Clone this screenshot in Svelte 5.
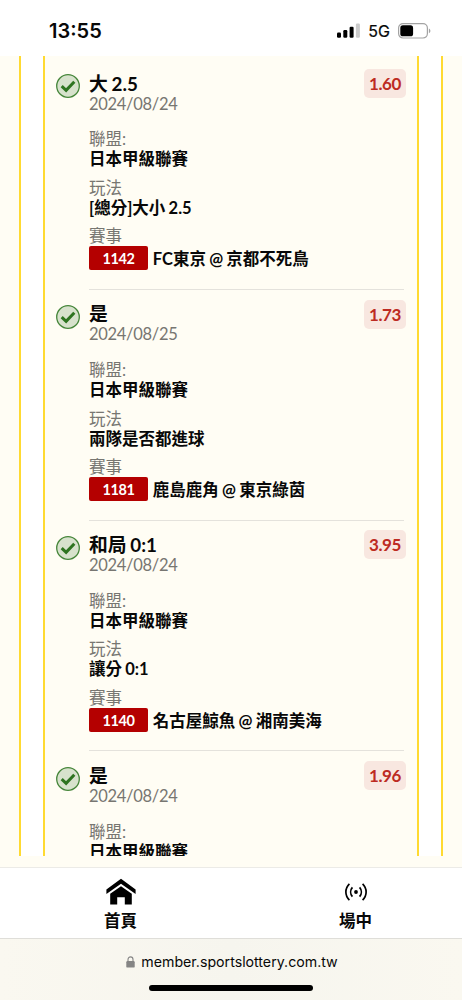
<script lang="ts">
	const bets = [
		{pick: '大 2.5', date: '2024/08/24', odds: '1.60', league: '日本甲級聯賽', play: '[總分]大小 2.5', code: '1142', match: 'FC東京 @ 京都不死鳥'},
		{pick: '是', date: '2024/08/25', odds: '1.73', league: '日本甲級聯賽', play: '兩隊是否都進球', code: '1181', match: '鹿島鹿角 @ 東京綠茵'},
		{pick: '和局 0:1', date: '2024/08/24', odds: '3.95', league: '日本甲級聯賽', play: '讓分 0:1', code: '1140', match: '名古屋鯨魚 @ 湘南美海'},
		{pick: '是', date: '2024/08/24', odds: '1.96', league: '日本甲級聯賽', play: '', code: '', match: ''},
	];
</script>

<div class="screen">
	<header class="status">
		<span class="time">13:55</span>
		<div class="signals">
			<svg width="24" height="16" viewBox="0 0 24 16">
				<rect x="0" y="9.5" width="4" height="5.3" rx="1.2" />
				<rect x="6.3" y="7" width="4" height="7.8" rx="1.2" />
				<rect x="12.6" y="3.8" width="4" height="11" rx="1.2" />
				<rect x="18.9" y="0.5" width="4" height="14.3" rx="1.2" fill="#cbcbcb" />
			</svg>
			<span class="network">5G</span>
			<svg width="33" height="16" viewBox="0 0 33 16">
				<rect x="0.6" y="0.6" width="28.8" height="14.4" rx="4.4" fill="none" stroke="#a3a3a3" stroke-width="1.2" />
				<rect x="2.3" y="2.3" width="12.8" height="11" rx="2.6" />
				<path d="M30.9 5.4c2 .9 2 3.9 0 4.8z" fill="#a3a3a3" />
			</svg>
		</div>
	</header>

	<main class="slides">
		<div class="slide prev"></div>
		<div class="slide current">
			{#each bets as bet}
				<section class="bet">
					<svg class="tick" width="24" height="24" viewBox="0 0 24 24">
						<circle cx="12" cy="12" r="11.3" fill="#d7e2cc" stroke="#46863a" stroke-width="1.3" />
						<path d="M5.7 12.2l4.4 4.2 8.2-8.7" fill="none" stroke="#2e7420" stroke-width="3" />
					</svg>
					<div class="detail">
						<div class="top">
							<div>
								<h2>{bet.pick}</h2>
								<p class="date">{bet.date}</p>
							</div>
							<span class="odds">{bet.odds}</span>
						</div>
						<p class="label">聯盟:</p>
						<p class="value">{bet.league}</p>
						{#if bet.play}
							<p class="label">玩法</p>
							<p class="value">{bet.play}</p>
							<p class="label">賽事</p>
							<div class="match">
								<span class="code">{bet.code}</span>
								<span class="value">{bet.match}</span>
							</div>
						{/if}
					</div>
				</section>
			{/each}
		</div>
		<div class="slide next"></div>
	</main>

	<nav>
		<div class="tab">
			<svg width="30" height="28" viewBox="0 0 30 28">
				<path d="M15 0.8L29.6 11.4V16L15 5.7L0.4 16V11.4z" />
				<path d="M15 8.2L25.8 15.8V26.6H18.8V19.2H11.2V26.6H4.2V15.8z" />
			</svg>
			<span>首頁</span>
		</div>
		<div class="tab">
			<svg width="24" height="28" viewBox="0 0 24 28" fill="none" stroke="#000" stroke-width="1.7">
				<circle cx="12" cy="14" r="1.9" fill="#000" stroke="none" />
				<path d="M8.4 9.4a7 7 0 0 0 0 9.2M15.6 9.4a7 7 0 0 1 0 9.2" />
				<path d="M5.4 5.9c-4.7 4.6-4.7 11.6 0 16.2M18.6 5.9c4.7 4.6 4.7 11.6 0 16.2" />
			</svg>
			<span>場中</span>
		</div>
	</nav>

	<footer>
		<div class="address">
			<svg width="9" height="12" viewBox="0 0 9 12">
				<rect x="0.3" y="5" width="8.4" height="6.6" rx="1.2" fill="#858585" />
				<path d="M2 5.5V3.4a2.5 2.5 0 0 1 5 0v2.1" fill="none" stroke="#858585" stroke-width="1.1" />
			</svg>
			<span>member.sportslottery.com.tw</span>
		</div>
		<div class="home-bar"></div>
	</footer>
</div>

<style>
	:global(body) {
		margin: 0;
		background: #fffdf4;
	}
	.screen {
		display: flex;
		flex-direction: column;
		width: 462px;
		height: 1000px;
		overflow: hidden;
		background: #fffdf4;
		color: #080808;
		font-family: Lato, 'Noto Sans CJK TC', sans-serif;
	}
	.status {
		flex: none;
		box-sizing: border-box;
		height: 56px;
		padding: 6px 31px 0 49px;
		display: flex;
		align-items: center;
		justify-content: space-between;
		background: #fff;
		font-family: Inter, sans-serif;
	}
	.time {
		font-size: 20px;
		font-weight: 600;
	}
	.signals {
		display: flex;
		align-items: center;
	}
	.network {
		margin: 0 8px 0 7px;
		font-size: 16px;
		font-weight: 400;
		-webkit-text-stroke: 0.2px #000;
	}
	.slides {
		flex: none;
		display: flex;
		justify-content: space-between;
		height: 800px;
		overflow: hidden;
		background: #fff;
	}
	.slide {
		box-sizing: border-box;
		background: #fffdf4;
		border: solid #ffda31;
		border-width: 0 2px;
	}
	.prev {
		width: 21px;
		border-left: 0;
	}
	.current {
		width: 376px;
		padding: 3px 12px 0 10.5px;
	}
	.next {
		width: 21px;
		border-right: 0;
	}
	.bet {
		display: flex;
		gap: 9.5px;
		height: 230.8px;
	}
	.tick {
		flex: none;
		margin-top: 15.3px;
	}
	.detail {
		box-sizing: border-box;
		width: 315px;
		padding-top: 14.6px;
		border-bottom: 1px solid #e4e2dc;
	}
	.top {
		display: flex;
		justify-content: space-between;
		height: 55.6px;
		margin-right: -2px;
	}
	h2,
	p {
		margin: 0;
		line-height: 20px;
		white-space: nowrap;
	}
	h2 {
		font-size: 18.8px;
		font-weight: 700;
		word-spacing: -0.8px;
	}
	.date,
	.label {
		font-size: 16.5px;
		font-weight: 400;
		color: #777671;
	}
	.date {
		letter-spacing: -0.3px;
	}
	.value {
		font-size: 16.5px;
		font-weight: 700;
		word-spacing: -0.8px;
	}
	p.value {
		margin-bottom: 8.6px;
	}
	.odds {
		box-sizing: border-box;
		width: 42px;
		height: 29px;
		margin-top: -4.8px;
		border-radius: 5px;
		background: #f8e7e0;
		color: #bd2b22;
		font-size: 17px;
		font-weight: 700;
		letter-spacing: -0.4px;
		line-height: 30px;
		text-align: center;
	}
	.match {
		display: flex;
		align-items: center;
		gap: 4.8px;
		height: 24px;
		line-height: 28px;
		white-space: nowrap;
	}
	.match .value {
		padding-top: 2px;
	}
	.code {
		width: 59px;
		height: 24px;
		border-radius: 2px;
		background: #b40000;
		color: #fff;
		font-size: 14.5px;
		font-weight: 700;
		letter-spacing: -0.4px;
		line-height: 25px;
		text-align: center;
	}
	nav {
		flex: none;
		box-sizing: border-box;
		height: 71px;
		margin-top: 11px;
		padding-left: 3px;
		display: flex;
		border-top: 1px solid #ecebe7;
		background: #fff;
	}
	.tab {
		flex: none;
		width: 235px;
		padding-top: 10px;
		display: flex;
		flex-direction: column;
		align-items: center;
		font-size: 16.5px;
		font-weight: 600;
		line-height: 30px;
	}
	footer {
		flex: 1;
		display: flex;
		flex-direction: column;
		align-items: center;
		border-top: 1px solid #dfded9;
		background: linear-gradient(90deg, #faf8f0, #f6f5ee 50%, #faf8f0);
	}
	.address {
		display: flex;
		align-items: center;
		gap: 6px;
		margin-top: 12px;
		padding-left: 2px;
		font-family: Inter, sans-serif;
		font-size: 14.2px;
		line-height: 22px;
	}
	.home-bar {
		width: 164px;
		height: 6px;
		margin-top: 12px;
		border-radius: 3px;
		background: #000;
	}
</style>
